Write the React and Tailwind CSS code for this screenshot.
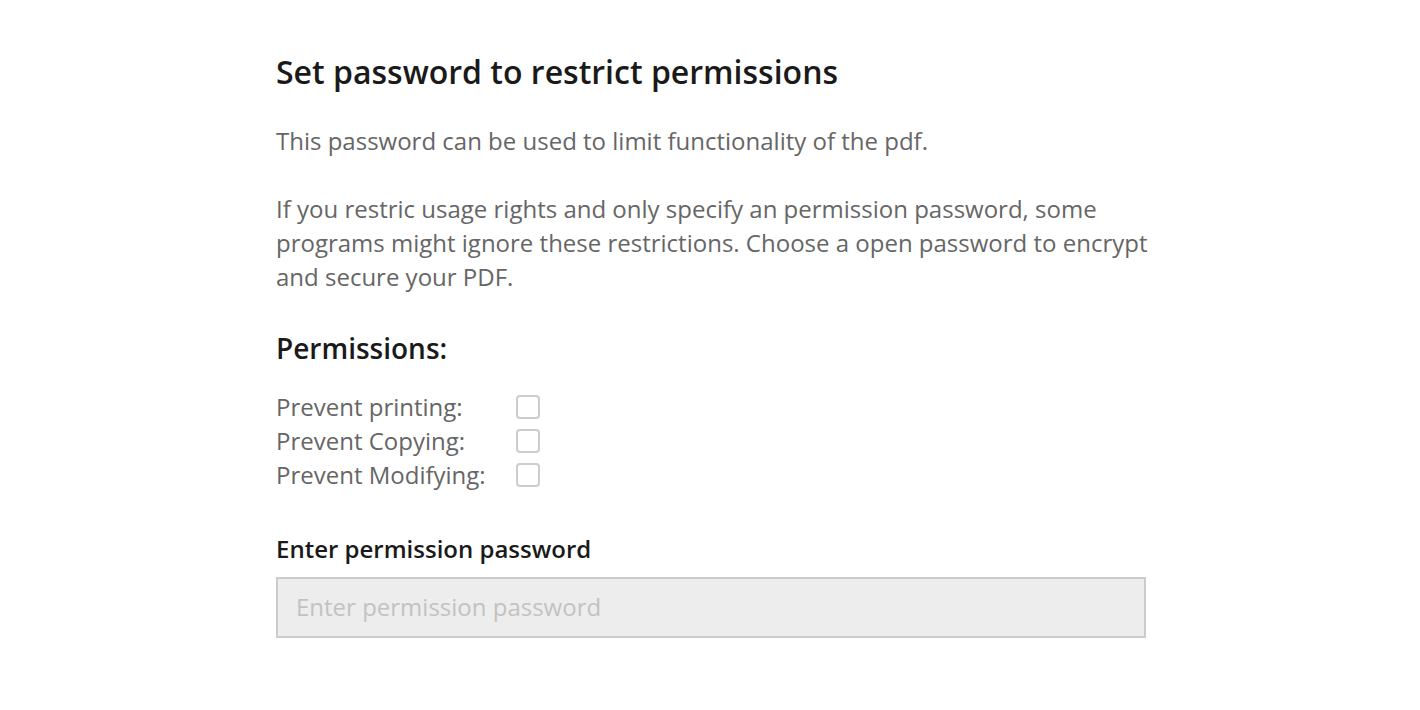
import React from 'react';

const permissions = ['Prevent printing:', 'Prevent Copying:', 'Prevent Modifying:'];

export default function App() {
  return (
    <div
      className="min-h-screen bg-white"
      style={{ fontFamily: '"Open Sans", "Noto Sans", sans-serif' }}
    >
      <div className="ml-[276px] w-[870px] pt-[52px]">
        {/* Title */}
        <h1 className="text-[32px] leading-[40px] font-semibold text-[#1a1a1a]">
          Set password to restrict permissions
        </h1>

        {/* Description */}
        <p className="mt-[32px] text-[24px] leading-[34px] text-[#666666]">
          This password can be used to limit functionality of the pdf.
        </p>
        <p className="mt-[34px] w-[880px] text-[24px] leading-[34px] text-[#666666]">
          If you restric usage rights and only specify an permission password, some programs might
          ignore these restrictions. Choose a open password to encrypt and secure your PDF.
        </p>

        {/* Permissions */}
        <h2 className="mt-[36px] text-[28px] leading-[36px] font-semibold text-[#1a1a1a]">
          Permissions:
        </h2>
        <div className="mt-[24px] flex flex-col">
          {permissions.map((label) => (
            <label key={label} className="flex items-center h-[34px]">
              <span className="w-[240px] text-[24px] leading-[34px] text-[#666666]">{label}</span>
              <span className="w-[24px] h-[24px] rounded-[4px] border-2 border-[#cccccc] bg-white" />
            </label>
          ))}
        </div>

        {/* Password */}
        <div className="mt-[41px] text-[24px] leading-[32px] font-semibold text-[#1a1a1a]">
          Enter permission password
        </div>
        <input
          type="password"
          placeholder="Enter permission password"
          className="mt-[12px] w-full h-[61px] px-[18px] pb-[2px] border-2 border-[#cccccc] bg-[#ededed] text-[24px] text-[#666666] placeholder:text-[#c2c2c2] outline-none"
        />
      </div>
    </div>
  );
}
